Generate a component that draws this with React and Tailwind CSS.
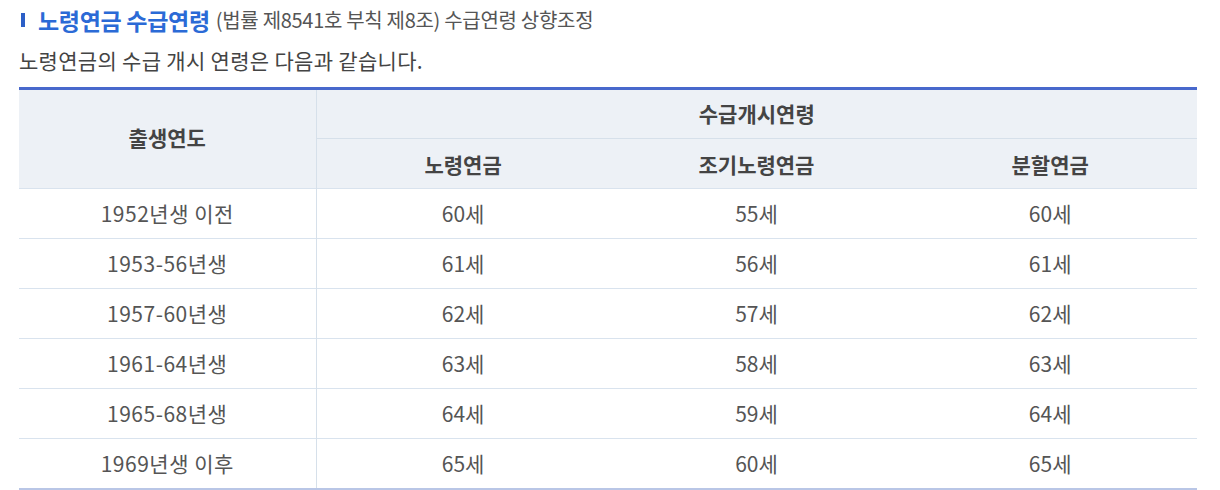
import React from 'react';

const rows = [
  ['1952년생 이전', '60세', '55세', '60세'],
  ['1953-56년생', '61세', '56세', '61세'],
  ['1957-60년생', '62세', '57세', '62세'],
  ['1961-64년생', '63세', '58세', '63세'],
  ['1965-68년생', '64세', '59세', '64세'],
  ['1969년생 이후', '65세', '60세', '65세'],
];

const App = () => {
  return (
    <div
      className="w-[1220px] h-[490px] bg-white overflow-hidden px-[19px] pt-[8px]"
      style={{ fontFamily: '"Noto Sans CJK KR", "Noto Sans", sans-serif' }}
    >
      {/* Title */}
      <div className="flex items-center h-6 leading-none">
        <span className="w-[4px] h-[14px] bg-[#2c5fc7] ml-[2px] mr-[13px]"></span>
        <span className="text-[23px] font-bold text-[#2b6ad6] tracking-[-0.3px]">노령연금 수급연령</span>
        <span className="text-[20px] text-[#555] ml-[6px] tracking-[-0.3px]">(법률 제8541호 부칙 제8조) 수급연령 상향조정</span>
      </div>
      <p className="mt-[16px] h-6 flex items-center leading-none text-[21px] text-[#444] tracking-[0.3px]">
        노령연금의 수급 개시 연령은 다음과 같습니다.
      </p>

      {/* Table */}
      <table className="mt-[15px] w-[1178px] border-collapse table-fixed border-t-[3px] border-t-[#4868cc] border-b-2 border-b-[#b9c6e6]">
        <colgroup>
          <col className="w-[297px]" />
          <col />
          <col />
          <col />
        </colgroup>
        <thead className="bg-[#edf1f6] text-[#444] text-[21px] font-bold leading-none">
          <tr className="h-[50px]">
            <th rowSpan={2} className="border-r border-r-[#d6e0ea] font-bold pb-[4px]">출생연도</th>
            <th colSpan={3} className="border-b border-b-[#d6e0ea] font-bold pb-[2px]">수급개시연령</th>
          </tr>
          <tr className="h-[50px]">
            <th className="font-bold pt-[2px]">노령연금</th>
            <th className="font-bold pt-[2px]">조기노령연금</th>
            <th className="font-bold pt-[2px]">분할연금</th>
          </tr>
        </thead>
        <tbody className="text-[21px] text-[#555] leading-none">
          {rows.map((r, i) => (
            <tr key={i} className="h-[50px] border-t border-t-[#d9e3ee]">
              <td className="text-center border-r border-r-[#d6e0ea] tracking-[0.5px]">{r[0]}</td>
              <td className="text-center">{r[1]}</td>
              <td className="text-center">{r[2]}</td>
              <td className="text-center">{r[3]}</td>
            </tr>
          ))}
        </tbody>
      </table>
    </div>
  );
};

export default App;
